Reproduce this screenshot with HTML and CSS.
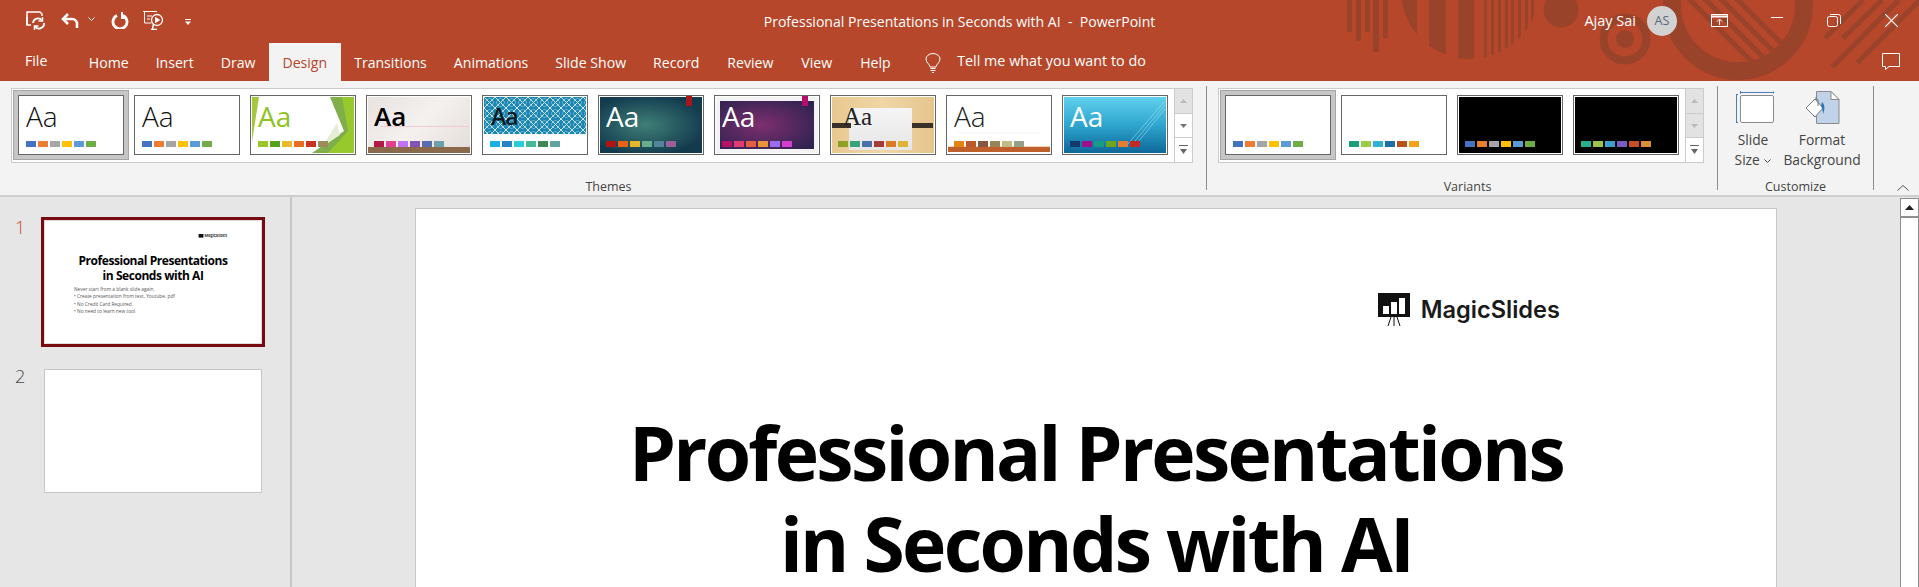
FILE: index.html
```html
<!DOCTYPE html>
<html lang="en">
<head>
<meta charset="utf-8">
<title>Professional Presentations in Seconds with AI - PowerPoint</title>
<link rel="stylesheet" href="styles.css">
</head>
<body>
<div class="app">
  <header class="head">
    <svg class="decor" width="1919" height="81" viewBox="0 0 1919 81">
      <defs>
        <clipPath id="c1"><circle cx="1470" cy="-10" r="69"/></clipPath>
        <clipPath id="c2"><circle cx="1738" cy="5" r="58"/></clipPath>
      </defs>
      <g fill="#9a432b">
        <rect x="1347" width="5" height="32"/><rect x="1356" width="5" height="41"/><rect x="1365" width="5" height="32"/><rect x="1373" width="6" height="52"/><rect x="1383" width="5" height="38"/>
        <g clip-path="url(#c1)">
          <rect x="1400" width="17" height="60"/><rect x="1429" width="17" height="60"/><rect x="1458" width="16" height="60"/>
          <rect x="1484" width="3" height="60"/><rect x="1491" width="3" height="60"/><rect x="1498" width="3" height="60"/><rect x="1505" width="3" height="60"/><rect x="1511" width="3" height="60"/><rect x="1518" width="3" height="60"/><rect x="1525" width="3" height="60"/><rect x="1531" width="3" height="60"/>
        </g>
        <circle cx="1561" cy="10" r="17.5"/>
        <circle cx="1625" cy="39" r="9"/>
      </g>
      <circle cx="1625" cy="39" r="21.5" fill="none" stroke="#9a432b" stroke-width="8"/>
      <circle cx="1738" cy="5" r="66" fill="none" stroke="#9a432b" stroke-width="18"/>
      <g clip-path="url(#c2)" stroke="#9a432b" stroke-width="5" fill="none">
        <path d="M1660 -30 L1780 90M1676 -30 L1796 90M1692 -30 L1812 90M1708 -30 L1828 90"/>
      </g>
      <g stroke="#9a432b" stroke-width="5" fill="none">
        <path d="M1825 38L1863 0M1843 38L1882 0M1832 67L1899 0M1857 63L1920 0"/>
      </g>
    </svg>
    <div class="titlebar">
      <div class="qat">
        <svg class="i-save" width="20" height="19" viewBox="0 0 20 19" fill="none" stroke="#fff" stroke-width="1.5"><path d="M5 14H1V1h13l2 2v2"/><path d="M1 14V6M7 12a5 5 0 0 1 9-2.500M18 12a5 5 0 0 1-9 3.500" stroke-width="1.800"/><path d="M16.500 6v4h-4M8.500 19v-4h4" stroke-width="1.500"/></svg>
        <svg class="i-undo" width="18" height="16" viewBox="0 0 18 16" fill="none" stroke="#fff" stroke-width="2.600"><path d="M7 1 2 6l5 5"/><path d="M2 6h9a5 5 0 0 1 5 5v4"/></svg>
        <svg class="i-chev" width="7" height="4" viewBox="0 0 7 4" fill="none" stroke="#fff"><path d="m.5.500 3 3 3-3"/></svg>
        <svg class="i-redo" width="18" height="17" viewBox="0 0 18 17" fill="none" stroke="#fff" stroke-width="2.800"><path d="M6 3.500a7 7 0 1 0 6 0"/><path d="M11 0v6h5" stroke-width="2"/></svg>
        <svg class="i-show" width="21" height="19" viewBox="0 0 21 19" fill="none" stroke="#fff"><path d="M0 .5h14M1.500 1v11h7"/><path d="M4 5h5M4 8h3"/><circle cx="14" cy="9" r="5.500" stroke-width="1.300"/><path d="m12.500 6.500 4 2.500-4 2.500z" fill="#fff"/><path d="M8 18.500h6M9.500 18l1-5" stroke-width="1.500"/></svg>
        <svg class="i-more" width="6" height="6" viewBox="0 0 6 6" fill="#fff"><rect width="6" height="1"/><path d="M0 2.500h6L3 6z"/></svg>
      </div>
      <div class="doc">Professional Presentations in Seconds with AI&nbsp; - &nbsp;PowerPoint</div>
      <div class="user">
        <span class="uname">Ajay Sai</span>
        <span class="avatar">AS</span>
        <svg class="w-opt" width="17" height="13" viewBox="0 0 17 13" fill="none" stroke="#fff"><rect x=".5" y=".5" width="16" height="12"/><path d="M1 2.500h15" stroke-width="2"/><path d="M8.500 11V5.500M6 7.500l2.500-2.500L11 7.500"/></svg>
        <svg class="w-min" width="12" height="1" viewBox="0 0 12 1"><rect width="12" height="1" fill="#fff"/></svg>
        <svg class="w-res" width="14" height="13" viewBox="0 0 14 13" fill="none" stroke="#fff"><rect x=".5" y="2.500" width="10" height="10" rx="2"/><path d="M3 .5h8.500a2 2 0 0 1 2 2V10"/></svg>
        <svg class="w-cls" width="13" height="13" viewBox="0 0 13 13" stroke="#fff" stroke-width="1.200"><path d="m0 0 13 13M13 0 0 13"/></svg>
      </div>
    </div>
    <nav class="tabs">
      <span class="tab file">File</span>
      <span class="tab">Home</span>
      <span class="tab">Insert</span>
      <span class="tab">Draw</span>
      <span class="tab active">Design</span>
      <span class="tab">Transitions</span>
      <span class="tab">Animations</span>
      <span class="tab">Slide Show</span>
      <span class="tab">Record</span>
      <span class="tab">Review</span>
      <span class="tab">View</span>
      <span class="tab">Help</span>
      <svg class="bulb" width="16" height="20" viewBox="0 0 16 20" fill="none" stroke="#fff"><path d="M5 14c0-3-4-4-4-8a7 5.500 0 0 1 14 0c0 4-4 5-4 8z"/><path d="M5.500 15.500h5M5.500 17.500h5M7 19.500h2"/></svg>
      <span class="tell">Tell me what you want to do</span>
      <svg class="comment" width="18" height="17" viewBox="0 0 18 17" fill="none" stroke="#fff"><path d="M.5.500h17v13H7l-3.500 3v-3h-3z"/></svg>
    </nav>
  </header>

  <section class="ribbon">
    <div class="group g-themes">
      <div class="gallery">
        <div class="thumb sel t1"><span class="aa">Aa</span><div class="sw"><i></i><i></i><i></i><i></i><i></i><i></i></div></div>
        <div class="thumb t1"><span class="aa">Aa</span><div class="sw"><i></i><i></i><i></i><i></i><i></i><i></i></div></div>
        <div class="thumb t3">
          <svg class="art" viewBox="0 0 102 56" preserveAspectRatio="none"><path d="M0 0h7L0 45z" fill="#a4c93e"/><path d="M78 0h24v56H60l32-22z" fill="#7fae4a"/><path d="M90 0h12v56H76l20-22z" fill="#97c92d"/><path d="M70 50l18-12-3-12z" fill="#e4eed4"/></svg>
          <span class="aa">Aa</span><div class="sw"><i></i><i></i><i></i><i></i><i></i><i></i></div></div>
        <div class="thumb t4"><span class="art line"></span><span class="art floor"></span><span class="aa">Aa</span><div class="sw"><i></i><i></i><i></i><i></i><i></i><i></i></div></div>
        <div class="thumb t5"><span class="art pat"></span><span class="aa">Aa</span><div class="sw"><i></i><i></i><i></i><i></i><i></i><i></i></div></div>
        <div class="thumb t6"><span class="art tag"></span><span class="aa">Aa</span><div class="sw"><i></i><i></i><i></i><i></i><i></i><i></i></div></div>
        <div class="thumb t7"><span class="art tag"></span><span class="aa">Aa</span><div class="sw"><i></i><i></i><i></i><i></i><i></i><i></i></div></div>
        <div class="thumb t8"><span class="art panel"></span><span class="art barl"></span><span class="art barr"></span><span class="aa">Aa</span><div class="sw"><i></i><i></i><i></i><i></i><i></i><i></i></div></div>
        <div class="thumb t9"><span class="art faint"></span><span class="art base"></span><span class="aa">Aa</span><div class="sw"><i></i><i></i><i></i><i></i><i></i><i></i></div></div>
        <div class="thumb t10">
          <svg class="art" viewBox="0 0 102 56" preserveAspectRatio="none" stroke="#a9e2f2" stroke-opacity=".55" fill="none"><path d="M66 50 101 8M70 50 101 12M63 48 100 5"/></svg>
          <span class="aa">Aa</span><div class="sw"><i></i><i></i><i></i><i></i><i></i><i></i></div></div>
        <div class="scroller">
          <span class="sb off"><svg width="7" height="4" viewBox="0 0 7 4"><path d="M0 4 3.500 0 7 4z" fill="#bbb"/></svg></span>
          <span class="sb"><svg width="7" height="4" viewBox="0 0 7 4"><path d="M0 0 3.500 4 7 0z" fill="#777"/></svg></span>
          <span class="sb"><svg width="9" height="10" viewBox="0 0 9 10" fill="#666"><rect width="9" height="1"/><path d="M1 4h7L4.500 9z"/></svg></span>
        </div>
      </div>
      <div class="glabel">Themes</div>
    </div>

    <div class="group g-variants">
      <div class="gallery">
        <div class="thumb sel t1"><span class="aa none"></span><div class="sw"><i></i><i></i><i></i><i></i><i></i><i></i></div></div>
        <div class="thumb v2"><span class="aa none"></span><div class="sw"><i></i><i></i><i></i><i></i><i></i><i></i></div></div>
        <div class="thumb t1 dark"><span class="aa none"></span><div class="sw"><i></i><i></i><i></i><i></i><i></i><i></i></div></div>
        <div class="thumb v4 dark"><span class="aa none"></span><div class="sw"><i></i><i></i><i></i><i></i><i></i><i></i></div></div>
        <div class="scroller">
          <span class="sb off"><svg width="7" height="4" viewBox="0 0 7 4"><path d="M0 4 3.500 0 7 4z" fill="#bbb"/></svg></span>
          <span class="sb off"><svg width="7" height="4" viewBox="0 0 7 4"><path d="M0 0 3.500 4 7 0z" fill="#bbb"/></svg></span>
          <span class="sb"><svg width="9" height="10" viewBox="0 0 9 10" fill="#666"><rect width="9" height="1"/><path d="M1 4h7L4.500 9z"/></svg></span>
        </div>
      </div>
      <div class="glabel">Variants</div>
    </div>

    <div class="group g-custom">
      <div class="cbtns">
        <div class="cbtn b-size">
          <svg class="cicon" width="38" height="34" viewBox="0 0 38 34" fill="none"><path d="M4.500 0v3M38 0v3M4.500 1.500H38" stroke="#4a7ebb"/><path d="M.5 3.500v28M0 3.500h2M0 31.500h2" stroke="#4a7ebb"/><rect x="4.500" y="4.500" width="33" height="27" rx="1.500" fill="#fff" stroke="#8a8a8a"/></svg>
          <span>Slide</span><span>Size <svg class="mini" width="7" height="4" viewBox="0 0 7 4" fill="none" stroke="#444"><path d="m.5.500 3 3 3-3"/></svg></span>
        </div>
        <div class="cbtn b-format">
          <svg class="cicon" width="36" height="34" viewBox="0 0 36 34"><path d="M12.500.5H27l8 8v24H12.500z" fill="#c0d3e8" stroke="#8a8a8a"/><path d="M27 .5v8h8z" fill="#fff" stroke="#8a8a8a"/><path d="M2 17 11 8l8 9-8 9z" fill="#fff" stroke="#777"/><path d="M11 7a3 3 0 0 1 3 4v4" fill="none" stroke="#777"/><path d="M18 11c3 2 3 8 1 12 0-3-1-6-2-8z" fill="#2f75b5"/></svg>
          <span>Format</span><span>Background</span>
        </div>
      </div>
      <div class="glabel">Customize</div>
    </div>

    <div class="rib-end">
      <svg width="12" height="6" viewBox="0 0 12 6" fill="none" stroke="#555"><path d="m.5 5.500 5.500-5 5.500 5"/></svg>
    </div>
  </section>

  <main class="work">
    <aside class="pane">
      <div class="sitem">
        <span class="num cur">1</span>
        <div class="mini-slide cur">
          <div class="m-logo">
            <svg width="6" height="5" viewBox="0 0 32 33"><path d="M0 0h32v24H0z" fill="#111"/></svg>
            <span>MagicSlides</span>
          </div>
          <div class="m-title">Professional Presentations<br>in Seconds with AI</div>
          <div class="m-body">
            <p>Never start from a blank slide again.</p>
            <p>• Create presentation from text, Youtube, pdf</p>
            <p>• No Credit Card Required</p>
            <p>• No need to learn new tool</p>
          </div>
        </div>
      </div>
      <div class="sitem">
        <span class="num">2</span>
        <div class="mini-slide"></div>
      </div>
    </aside>
    <div class="stage">
      <article class="slide">
        <div class="logo">
          <svg width="32" height="33" viewBox="0 0 32 33"><path d="M0 0h32v24H0z" fill="#111"/><path d="M5 13h6v8H5zM13 9h6v12h-6zM21 5h6v16h-6z" fill="#fff"/><path d="M13 24l-3 9M16 24v9M19 24l3 9" stroke="#111" fill="none"/></svg>
          <span>MagicSlides</span>
        </div>
        <h1>Professional Presentations<br>in Seconds with AI</h1>
      </article>
    </div>
    <div class="vscroll">
      <div class="vbtn"><svg width="9" height="5" viewBox="0 0 9 5"><path d="M0 5 4.500 0 9 5z" fill="#222"/></svg></div>
    </div>
  </main>
</div>
</body>
</html>
```

FILE: styles.css
```css
* { box-sizing: border-box; }
html, body { margin: 0; height: 100%; overflow: hidden; }
body { font-family: "Open Sans", "Noto Sans", sans-serif; font-size: 13.500px; color: #444; background: #e6e6e6; }
.app { display: flex; flex-direction: column; height: 587px; width: 1919px; }

/* title area */
.head { position: relative; height: 81px; background: #b7472a; color: #fff; flex: none; }
.decor { position: absolute; inset: 0; }
.titlebar { position: relative; height: 43px; display: grid; grid-template-columns: 1fr auto 1fr; align-items: center; }
.qat { display: flex; align-items: center; height: 43px; padding-left: 26px; }
.qat svg { flex: none; }
.i-save { margin-top: -3px; }
.i-undo { margin-left: 15px; margin-top: -2px; }
.i-chev { margin-left: 9px; margin-top: -5px; }
.i-redo { margin-left: 16px; margin-top: -3px; }
.i-show { margin-left: 14px; margin-top: -3px; }
.i-more { margin-left: 21px; margin-top: 1px; }
.doc { font-size: 14.050px; margin-top: -1px; }
.user { display: flex; align-items: center; justify-content: flex-end; margin-top: -2px; }
.uname { font-size: 14.500px; }
.avatar { width: 30px; height: 30px; border-radius: 50%; background: #d2d2d2; color: #58687a; font-size: 12.500px; display: flex; align-items: center; justify-content: center; margin-left: 11px; }
.w-opt { margin-left: 34px; }
.w-min { margin-left: 43px; margin-top: -6px; }
.w-res { margin-left: 44px; }
.w-cls { margin-left: 44px; margin-right: 21px; }

.tabs { position: relative; height: 38px; display: flex; align-items: center; padding-left: 25px; }
.tab { height: 38px; padding: 0 13.500px; display: flex; align-items: center; font-size: 14.100px; }
.tab:nth-of-type(n+10) { margin-left: 1px; }
.tab.file { padding: 0 28px 0 0; margin-top: -3px; }
.tab.active { background: #f3f3f3; color: #b7472a; }
.bulb { margin-left: 21px; flex: none; margin-top: 1px; }
.tell { margin-left: 16px; font-size: 14.350px; margin-top: -3px; }
.comment { margin-left: auto; margin-right: 19px; margin-top: -1px; }

/* ribbon */
.ribbon { display: flex; height: 116px; flex: none; background: #f3f3f3; border-bottom: 2px solid #cfcfcf; padding-top: 5px; }
.group { height: 104px; display: flex; flex-direction: column; border-right: 1px solid #8c8c8c; flex: none; }
.g-themes { width: 1207px; padding-left: 11px; }
.g-variants { width: 511px; padding-left: 11px; }
.g-custom { width: 156px; }
.rib-end { flex: 1; display: flex; justify-content: flex-start; align-items: flex-end; padding: 0 0 0 23px; height: 105px; }
.glabel { margin-top: auto; height: 12px; line-height: 12px; margin-bottom: -3px; text-align: center; font-size: 12.500px; color: #444; }
.gallery { margin-top: 2px; height: 75px; display: flex; background: #fff; border: 1px solid #cbcbcb; padding: 6px 0 0 6px; gap: 10px; align-self: flex-start; position: relative; }
.g-themes .gallery { width: 1182px; }
.g-variants .gallery { width: 486px; }
.scroller { position: absolute; right: 0; top: 0; bottom: 0; width: 18px; display: flex; flex-direction: column; border-left: 1px solid #cbcbcb; }
.sb { flex: 1; display: flex; align-items: center; justify-content: center; border-bottom: 1px solid #cbcbcb; }
.sb:last-child { border-bottom: 0; }
.sb.off { background: #e2e2e2; }

.thumb { position: relative; width: 106px; height: 60px; border: 1px solid #666; background: #fff; display: flex; flex-direction: column; flex: none; }
.thumb.sel { box-shadow: 0 0 0 4px #c6c6c6, 0 0 0 5px #a5a5a5; }
.thumb.dark { background: #000; box-shadow: inset 0 0 0 1px #fff; }
.art { position: absolute; left: 1px; top: 1px; width: 102px; height: 56px; display: block; }
.aa { position: relative; display: block; height: 36px; line-height: 41px; font-size: 28px; font-weight: 300; color: #111; padding-left: 7px; font-family: "Open Sans", sans-serif; }
.aa.none { height: 36px; }
.sw { position: relative; display: flex; gap: 2px; margin: 9px 0 0 7px; }
.sw i { display: block; width: 10px; height: 6px; }

.t1 i:nth-child(1) { background: #4472c4; } .t1 i:nth-child(2) { background: #ed7d31; } .t1 i:nth-child(3) { background: #a5a5a5; } .t1 i:nth-child(4) { background: #ffc000; } .t1 i:nth-child(5) { background: #5b9bd5; } .t1 i:nth-child(6) { background: #70ad47; }
.t3 i:nth-child(1) { background: #9bc529; } .t3 i:nth-child(2) { background: #5aa020; } .t3 i:nth-child(3) { background: #e9b82c; } .t3 i:nth-child(4) { background: #e96d22; } .t3 i:nth-child(5) { background: #c9331f; } .t3 i:nth-child(6) { background: #9c8a5c; }
.t4 i:nth-child(1) { background: #b31b44; } .t4 i:nth-child(2) { background: #e0408e; } .t4 i:nth-child(3) { background: #c070f0; } .t4 i:nth-child(4) { background: #8455b0; } .t4 i:nth-child(5) { background: #5a6cae; } .t4 i:nth-child(6) { background: #6e9fb0; }
.t5 i:nth-child(1) { background: #1cade4; } .t5 i:nth-child(2) { background: #2683c6; } .t5 i:nth-child(3) { background: #27ced7; } .t5 i:nth-child(4) { background: #42ba97; } .t5 i:nth-child(5) { background: #3e8853; } .t5 i:nth-child(6) { background: #62a39f; }
.t6 i:nth-child(1) { background: #b01513; } .t6 i:nth-child(2) { background: #ea6312; } .t6 i:nth-child(3) { background: #e6b729; } .t6 i:nth-child(4) { background: #6aac90; } .t6 i:nth-child(5) { background: #54849a; } .t6 i:nth-child(6) { background: #9e5e9b; }
.t7 i:nth-child(1) { background: #b31166; } .t7 i:nth-child(2) { background: #e33d6f; } .t7 i:nth-child(3) { background: #e45f3c; } .t7 i:nth-child(4) { background: #e9943a; } .t7 i:nth-child(5) { background: #9b6bf2; } .t7 i:nth-child(6) { background: #d53dd0; }
.t8 i:nth-child(1) { background: #8ca122; } .t8 i:nth-child(2) { background: #38a37b; } .t8 i:nth-child(3) { background: #4a72a8; } .t8 i:nth-child(4) { background: #a93a3a; } .t8 i:nth-child(5) { background: #d97a25; } .t8 i:nth-child(6) { background: #e0b238; }
.t9 i:nth-child(1) { background: #e48312; } .t9 i:nth-child(2) { background: #bd582c; } .t9 i:nth-child(3) { background: #865640; } .t9 i:nth-child(4) { background: #9b8357; } .t9 i:nth-child(5) { background: #c2bc80; } .t9 i:nth-child(6) { background: #94a088; }
.t10 i:nth-child(1) { background: #0f3a6e; } .t10 i:nth-child(2) { background: #a0108a; } .t10 i:nth-child(3) { background: #169b84; } .t10 i:nth-child(4) { background: #6ea61e; } .t10 i:nth-child(5) { background: #e57c32; } .t10 i:nth-child(6) { background: #c62828; }
.v2 i:nth-child(1) { background: #1b9e7b; } .v2 i:nth-child(2) { background: #9acd45; } .v2 i:nth-child(3) { background: #2fb3d0; } .v2 i:nth-child(4) { background: #1a6fa8; } .v2 i:nth-child(5) { background: #b9501a; } .v2 i:nth-child(6) { background: #f5a11e; }
.v4 i:nth-child(1) { background: #26b08c; } .v4 i:nth-child(2) { background: #9cc14c; } .v4 i:nth-child(3) { background: #3aa0d0; } .v4 i:nth-child(4) { background: #7c5cc4; } .v4 i:nth-child(5) { background: #c84c2c; } .v4 i:nth-child(6) { background: #d99030; }

.t3 .aa { color: #8fc31f; font-weight: 400; }
.t4 { background: linear-gradient(135deg, #e9e2df, #f4f1ef 50%, #e4dcd8); box-shadow: inset 0 0 0 1px #fff; }
.t4 .aa { color: #000; font-weight: 600; font-size: 26px; }
.line { top: 30px; left: 14px; width: 88px; height: 1px; background: #eeccd2; }
.floor { top: 51px; height: 6px; background: #8a6a4a; }
.t5 .aa { color: #0a1a24; font-weight: 600; font-size: 23px; letter-spacing: -1px; padding-left: 8px; }
.pat { height: 37px; background-color: #1d87b4; background-image: radial-gradient(circle at 50% 50%, transparent 40%, #9fd0e4 48%, transparent 56%), linear-gradient(45deg, transparent 46%, #cfe6f0 50%, transparent 54%), linear-gradient(-45deg, transparent 46%, #cfe6f0 50%, transparent 54%); background-size: 11px 11px; }
.t6 { background: radial-gradient(ellipse at 45% 50%, #3f7f77, #133b4e 75%); box-shadow: inset 0 0 0 1px #fff; }
.t6 .aa, .t7 .aa, .t10 .aa { color: #fff; font-weight: 400; }
.tag { left: 87px; top: 0; width: 6px; height: 10px; background: #a9151a; }
.t7 { background: radial-gradient(ellipse at 45% 50%, #7d2f6f, #2e2250 80%); box-shadow: inset 0 0 0 1px #fff, inset 0 0 0 5px #f3f3f3; }
.t7 .tag { background: #b3106b; }
.t8 { background: linear-gradient(90deg, #e9c88f, #efd6a6 50%, #e6c48c); box-shadow: inset 0 0 0 1px #fff; }
.t8 .aa { font-family: "Liberation Serif", serif; color: #222; font-weight: 400; font-size: 25px; padding-left: 12px; }
.panel { left: 18px; top: 12px; width: 63px; height: 42px; background: linear-gradient(#f5f5f5, #e6e6e6); }
.barl { top: 27px; width: 19px; height: 5px; background: #3a3228; }
.barr { top: 27px; left: 81px; width: 21px; height: 5px; background: #3a3228; }
.t9 .aa { color: #222; }
.faint { top: 36px; left: 10px; width: 84px; height: 1px; background: #f5f5f5; }
.base { top: 51px; height: 5px; background: #bf5f2c; box-shadow: 0 -1px 0 #f2d6bb; }
.t10 { background: linear-gradient(#62d2ee, #2ea6cf 50%, #0d6597); box-shadow: inset 0 0 0 1px #fff; }

.cbtns { display: flex; padding: 5px 0 0 5px; }
.cbtn { display: flex; flex-direction: column; align-items: center; line-height: 20px; font-size: 13.800px; color: #444; }
.cbtn span { display: block; white-space: nowrap; }
.b-size { width: 60px; }
.b-format { width: 78px; }
.cicon { margin-bottom: 5px; display: block; flex: none; }
.b-size .cicon { margin-left: 3px; }
.mini { vertical-align: middle; margin-left: 1px; }

/* work area */
.work { flex: 1; display: flex; min-height: 0; overflow: hidden; }
.pane { width: 292px; flex: none; border-right: 2px solid #c6c6c6; padding-top: 20px; }
.sitem { display: flex; margin-bottom: 22px; height: 130px; }
.sitem:nth-child(2) { height: 124px; }
.num { width: 41px; padding-left: 15px; font-size: 18px; line-height: 20px; color: #444; font-weight: 300; flex: none; margin-top: -3px; }
.num.cur { color: #d24726; margin-top: 0; }
.mini-slide { margin-left: 3px; width: 218px; height: 124px; background: #fff; border: 1px solid #c6c6c6; }
.mini-slide.cur { margin: 0; width: 224px; height: 130px; border: 3px solid #770b10; box-shadow: inset 0 0 0 1px #ddd; padding-top: 13px; }
.m-logo { display: flex; justify-content: flex-end; align-items: center; gap: 1px; padding-right: 35px; font-size: 3.800px; font-family: Inter, sans-serif; font-weight: 600; color: #222; line-height: 6px; height: 6px; }
.m-title { text-align: center; font-size: 12px; line-height: 14.500px; font-weight: 700; color: #000; margin-top: 15px; letter-spacing: -.45px; }
.m-body { margin: 3px 0 0 30px; font-size: 4.800px; line-height: 7.400px; color: #555; }
.m-body p { margin: 0; }

.stage { flex: 1; min-width: 0; padding: 11px 0 0 123px; overflow: hidden; }
.slide { width: 1362px; height: 500px; background: #fff; border: 1px solid #c6c6c6; padding-top: 84px; display: flex; flex-direction: column; }
.logo { align-self: flex-end; margin-right: 216px; display: flex; align-items: center; gap: 11px; font-family: Inter, sans-serif; font-weight: 600; font-size: 23.600px; color: #1a1a1a; }
h1 { margin: 0; text-align: center; font-size: 75px; line-height: 91px; font-weight: 700; color: #000; margin-top: 81px; letter-spacing: -2.700px; }

.vscroll { width: 19px; flex: none; margin-top: 1px; background: #fff; border: 1px solid #8f8f8f; border-bottom: 0; }
.vbtn { height: 19px; display: flex; align-items: center; justify-content: center; border-bottom: 2px solid #8f8f8f; }
```
